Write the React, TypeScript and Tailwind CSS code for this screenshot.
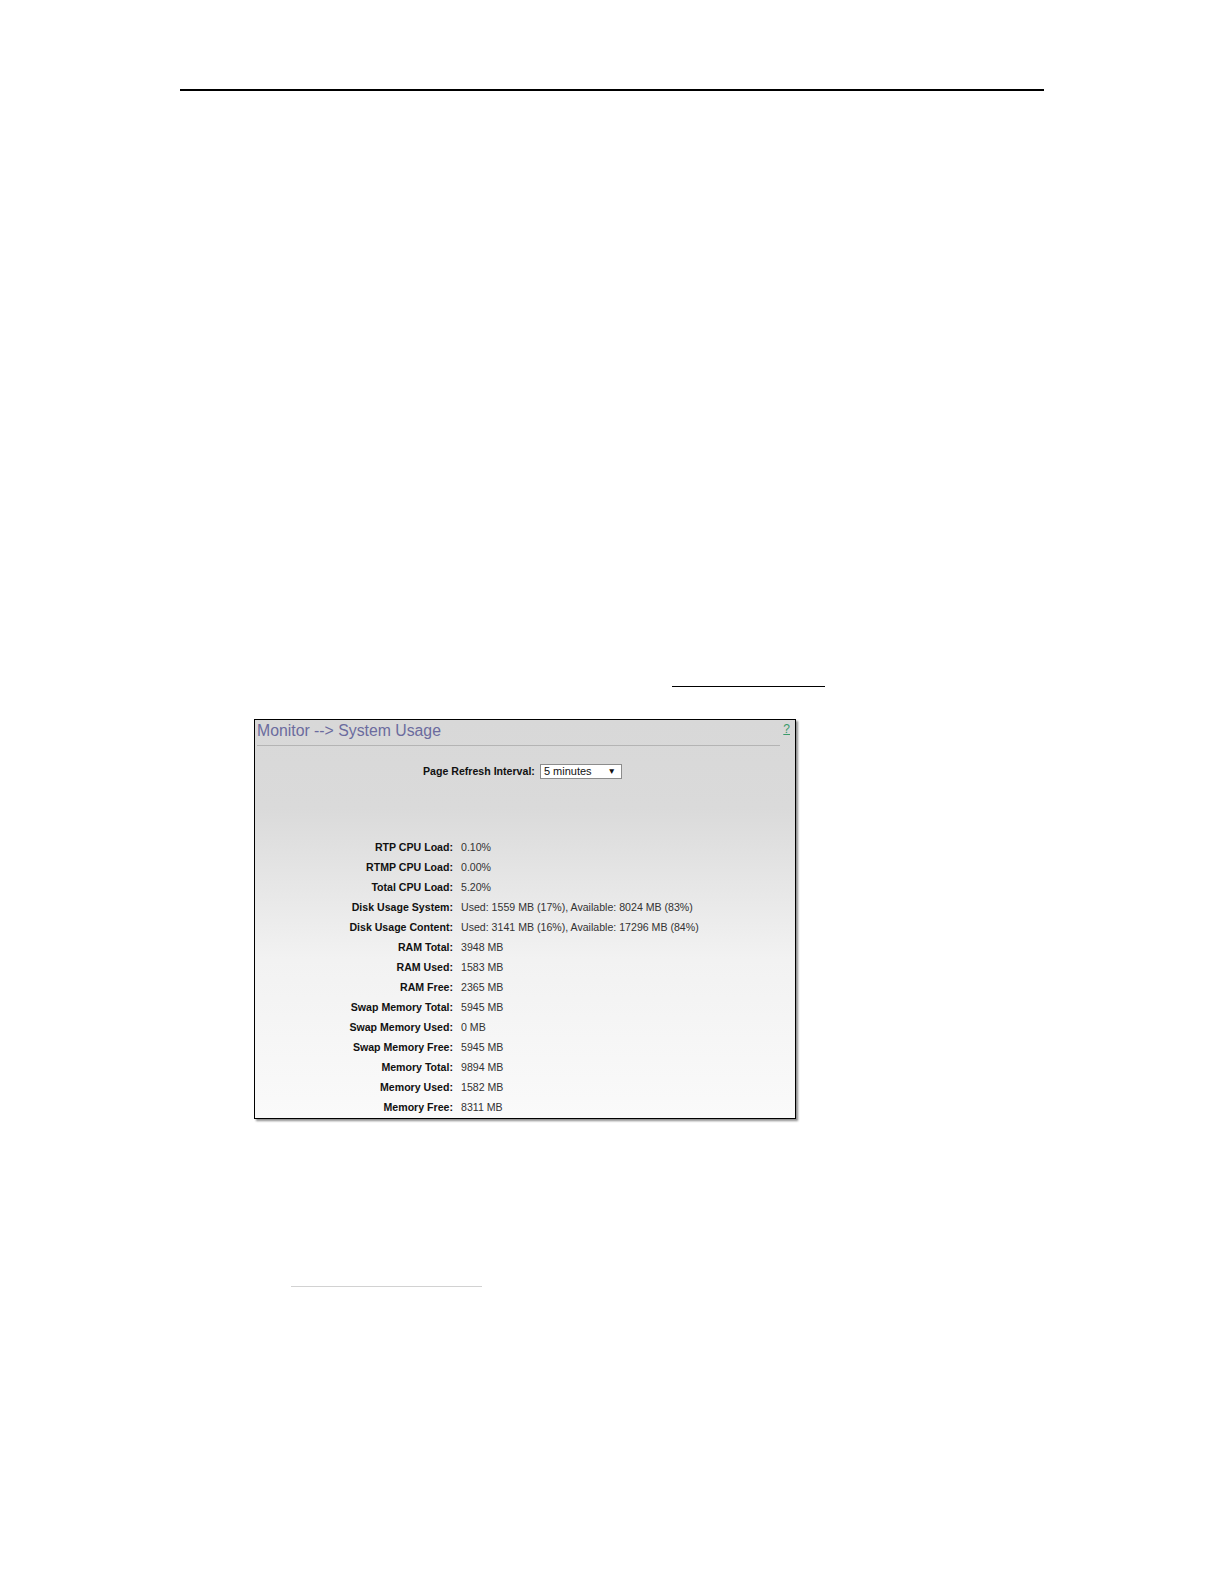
import React from 'react';

const rows: [string, string][] = [
    ['RTP CPU Load:', '0.10%'],
    ['RTMP CPU Load:', '0.00%'],
    ['Total CPU Load:', '5.20%'],
    ['Disk Usage System:', 'Used: 1559 MB (17%), Available: 8024 MB (83%)'],
    ['Disk Usage Content:', 'Used: 3141 MB (16%), Available: 17296 MB (84%)'],
    ['RAM Total:', '3948 MB'],
    ['RAM Used:', '1583 MB'],
    ['RAM Free:', '2365 MB'],
    ['Swap Memory Total:', '5945 MB'],
    ['Swap Memory Used:', '0 MB'],
    ['Swap Memory Free:', '5945 MB'],
    ['Memory Total:', '9894 MB'],
    ['Memory Used:', '1582 MB'],
    ['Memory Free:', '8311 MB'],
];

const SystemUsagePanel: React.FC = () => (
    <div className="ml-[254px] w-[542px] border border-black shadow-[2px_2px_2px_rgba(0,0,0,0.45)] bg-[linear-gradient(to_bottom,#d8d8d8_0%,#dadada_22%,#f2f2f2_60%,#fafafa_100%)] flex flex-col font-['Liberation_Sans',Arial,sans-serif]">
        <div className="flex items-center justify-between pt-px pl-[2px] pr-[5px]">
            <span className="text-[15.8px] leading-[20px] text-[#6b6b9e]">Monitor --&gt; System Usage</span>
            <span className="text-[12px] leading-[20px] text-[#3a9a6a] underline -mt-[3px]">?</span>
        </div>
        <div className="mt-[4px] ml-[2px] w-[523px] h-px bg-[#b4b4b4]" />

        <div className="mt-[18px] flex items-center gap-[5px] pl-[168px]">
            <span className="text-[10.6px] font-bold text-[#111]">Page Refresh Interval:</span>
            <div className="w-[82px] h-[15px] bg-white border border-[#8c8c8c] flex items-center justify-between pl-[3px] pr-[5px]">
                <span className="text-[11px] leading-none text-[#111]">5 minutes</span>
                <span className="text-[8.5px] leading-none text-[#111]">▼</span>
            </div>
        </div>

        <div className="mt-[59px] flex flex-col">
            {rows.map(([label, value]) => (
                <div key={label} className="flex items-center h-[20px] text-[10.6px]">
                    <span className="w-[198px] text-right font-bold text-[#111]">{label}</span>
                    <span className="ml-[8px] text-[#333]">{value}</span>
                </div>
            ))}
        </div>
    </div>
);

export default function App() {
    return (
        <div className="w-[1224px] h-[1584px] bg-white overflow-hidden">
            <div className="pt-[89px]">
                <div className="ml-[180px] w-[864px] h-[1.5px] bg-black" />
            </div>
            <div className="mt-[595px] ml-[672px] w-[153px] h-px bg-black" />
            <div className="mt-[32px]">
                <SystemUsagePanel />
            </div>
            <div className="mt-[167px] ml-[291px] w-[191px] h-px bg-[#d2d2d2]" />
        </div>
    );
}
